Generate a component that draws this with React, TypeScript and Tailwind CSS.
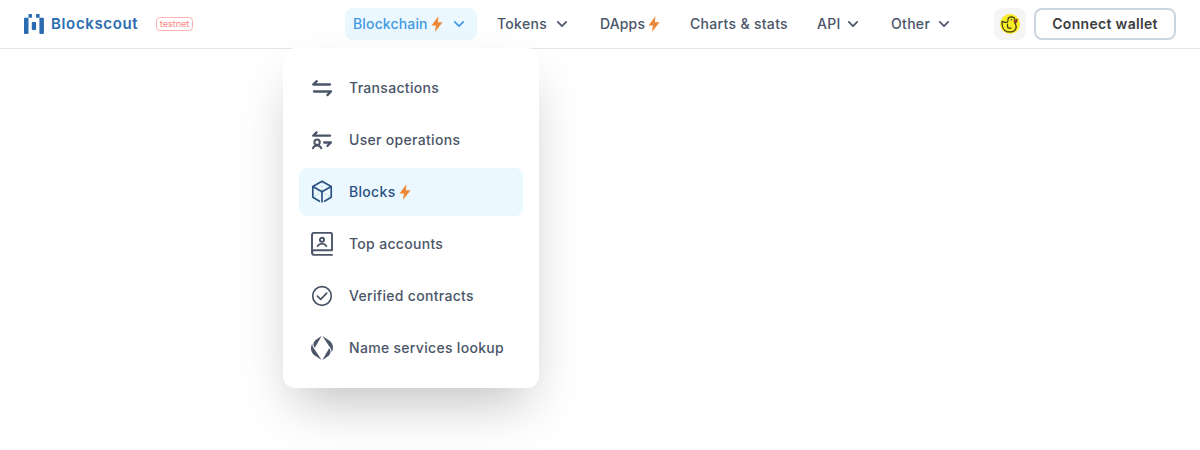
import React from 'react';

type IconProps = { className?: string };

const Bolt = ({ className = '' }: IconProps) => (
  <svg viewBox="0 0 12 16" className={`h-4 w-3 shrink-0 fill-[#ed8936] ${className}`}>
    <path d="M7.400.2.5 9.400H4.900L4 15.900 11.500 6.200H6.900z" />
  </svg>
);

const Chevron = () => (
  <svg viewBox="0 0 12 8" className="h-2 w-3 fill-none stroke-current" strokeWidth="1.7" strokeLinecap="round" strokeLinejoin="round">
    <path d="M1.8 1.900 6 6.100l4.200-4.200" />
  </svg>
);

const iconClass = 'h-6 w-6 shrink-0 fill-none stroke-current';

const TransactionsIcon = () => (
  <svg viewBox="0 0 24 24" className={iconClass} strokeWidth="2.3" strokeLinecap="round" strokeLinejoin="round">
    <path d="M20 8.500H3.200l3.600-3.300M4 15.500h17l-3.600 3.600" />
  </svg>
);

const UserOpsIcon = () => (
  <svg viewBox="0 0 24 24" className={iconClass} strokeLinecap="round" strokeLinejoin="round">
    <path strokeWidth="2.300" d="M20 7.700H3.200L6.500 4.400" />
    <path strokeWidth="2.300" d="M14.200 14.500h6.700l-3.500 3.500" />
    <circle cx="7.100" cy="14.300" r="2.700" strokeWidth="2" />
    <path strokeWidth="2" d="M2.900 20.200c1-1.800 2.400-2.600 4.200-2.600s3.200.8 4.200 2.600" />
  </svg>
);

const BlocksIcon = () => (
  <svg viewBox="0 0 24 24" className={iconClass} strokeWidth="1.700" strokeLinejoin="round">
    <path d="M10 21.400 2.800 17.300V6.400L12 1.200l9.200 5.200v10.900L14 21.400M2.800 6.400 12 11.800l9.200-5.400M12 11.800V22.500" />
    <path strokeWidth=".8" strokeDasharray="2 1.500" opacity=".35" d="M12 2v9.800M12 11.800 3.500 17M12 11.800l8.500 5.200" />
  </svg>
);

const AccountsIcon = () => (
  <svg viewBox="0 0 24 24" className={iconClass} strokeWidth="1.900" strokeLinecap="round" strokeLinejoin="round">
    <path d="M22 22.900H4.300a2.300 2.300 0 0 1 0-4.600H22V2.200A1.300 1.300 0 0 0 20.700.9H4A2 2 0 0 0 2 2.900v17.700" />
    <circle cx="12" cy="7.800" r="2.100" />
    <path d="M7.700 14c1-1.600 2.400-2.400 4.300-2.400s3.300.8 4.300 2.400" />
  </svg>
);

const VerifiedIcon = () => (
  <svg viewBox="0 0 24 24" className={iconClass} strokeWidth="1.700" strokeLinecap="round" strokeLinejoin="round">
    <circle cx="12" cy="12" r="9.300" />
    <path d="m7.400 12.100 3.300 3.300 6-6.200" />
  </svg>
);

const NameIcon = () => (
  <svg viewBox="0 0 24 24" className="h-6 w-6 shrink-0 fill-current">
    <path d="M11.600 0 5 11.500c-.1.200-.4.200-.5 0C3.300 9.600 2.800 6.600 5.300 4.300 7.300 2.700 9.600 1.300 11.600 0ZM2.300 7.500c-2 3.900-1.900 8.400 2.100 11.700L11.600 24 4.800 13.800C3.200 11.800 2.100 9.600 2.300 7.500Z" />
    <path d="m12.400 24 6.600-11.500c.1-.2.400-.2.500 0 1.200 1.900 1.700 4.900-.8 7.200-2 1.600-4.300 3-6.300 4.300ZM21.700 16.500c2-3.900 1.900-8.400-2.100-11.700L12.400 0l6.800 10.200c1.600 2 2.700 4.200 2.500 6.300Z" />
  </svg>
);

const DuckIcon = () => (
  <svg viewBox="0 0 20 20" className="h-5 w-5">
    <circle cx="10" cy="10" r="10" fill="#f7ec25" />
    <g fill="none" stroke="#3d3a16" strokeWidth="1.200" strokeLinecap="round" strokeLinejoin="round">
      <path d="M14.700 5.200C14 2.100 8.700 2 8 5.200c-.3 1.500.4 2.500-.7 2.900-1.600.6-3.500 0-5.200-.7-.4 4 .8 8.800 5 10.400h4.800c4.200-.8 5.600-5 2.900-9" />
      <path d="M7.500 10.200v2c0 1.400.8 2 2 2h1.400" />
    </g>
    <circle cx="11.400" cy="5.700" r=".8" fill="#3d3a16" />
    <path d="M13.800 6.700 17.200 5l-.4 3.300-2 .9Z" fill="#b5322b" stroke="#3d2618" strokeWidth=".6" />
  </svg>
);

const LogoMark = () => (
  <svg viewBox="0 0 20 20" className="h-5 w-5 shrink-0 fill-[#2b6cb0]">
    <path d="M4.900 0h2.500a.6.600 0 0 1 .6.600V3.200a.6.600 0 0 1-.6.600H4.500V.6A.6.600 0 0 1 4.900 0ZM12.500 0H15a.6.600 0 0 1 .6.600v3.200h-3a.6.600 0 0 1-.6-.6V.6a.6.600 0 0 1 .5-.6ZM.9 3.700h3.600v15.400a.9.900 0 0 1-.9.900H.9a.9.900 0 0 1-.9-.9V4.600a.9.900 0 0 1 .9-.9ZM15.400 3.700H19a.9.900 0 0 1 .9.900v14.500a.9.900 0 0 1-.9.900h-2.700a.9.900 0 0 1-.9-.9zM8.500 8h2.900a.7.700 0 0 1 .7.700v6.600a.7.700 0 0 1-.7.700H8.500a.7.700 0 0 1-.7-.7V8.700A.7.700 0 0 1 8.500 8Z" />
  </svg>
);

const navItems = [
  { label: 'Blockchain', width: 'w-[132px]', bolt: true, chevron: true, active: true },
  { label: 'Tokens', width: 'w-[91px]', chevron: true },
  { label: 'DApps', width: 'w-[78px]', bolt: true },
  { label: 'Charts & stats', width: 'w-[115px]' },
  { label: 'API', width: 'w-[62px]', chevron: true },
  { label: 'Other', width: 'w-[79px]', chevron: true },
];

const menuItems = [
  { label: 'Transactions', icon: <TransactionsIcon /> },
  { label: 'User operations', icon: <UserOpsIcon /> },
  { label: 'Blocks', icon: <BlocksIcon />, active: true },
  { label: 'Top accounts', icon: <AccountsIcon /> },
  { label: 'Verified contracts', icon: <VerifiedIcon /> },
  { label: 'Name services lookup', icon: <NameIcon /> },
];

export default function App() {
  return (
    <div className="relative h-[450px] overflow-hidden bg-white font-['Inter',sans-serif] text-sm font-medium tracking-[0.31px] text-[#4a5568]">
      <header className="flex h-[49px] items-start border-b border-[#e7e7e8] pt-2 pl-6">
        <div className="flex h-8 w-[321px] items-center">
          <LogoMark />
          <span className="ml-[7px] w-[87px] text-[15px] font-semibold tracking-[0.65px] text-[#2b6cb0]">Blockscout</span>
          <span className="ml-[18px] flex h-[14px] w-[37px] items-center justify-center rounded-[4px] border border-[#feb2b2] text-[9px] font-normal tracking-normal text-[#fc8181]">
            testnet
          </span>
        </div>
        <nav className="flex gap-3">
          {navItems.map((item) => (
            <a
              key={item.label}
              className={`flex h-8 items-center rounded-lg px-2 whitespace-nowrap ${item.width} ${item.active ? 'bg-[#ebf8ff] text-[#4299e1]' : ''}`}
            >
              <span className={item.bolt ? 'tracking-[0.15px]' : ''}>{item.label}</span>
              {item.bolt && <Bolt className="ml-[3px]" />}
              {item.chevron && (
                <span className="mr-1 ml-auto">
                  <Chevron />
                </span>
              )}
            </a>
          ))}
        </nav>
        <div className="ml-8 flex gap-2">
          <button className="flex h-8 w-8 items-center justify-center rounded-lg bg-[#f5f5f6]">
            <DuckIcon />
          </button>
          <button className="h-8 w-[142px] rounded-lg border-2 border-[#cbd5e0] font-semibold tracking-[0.32px] whitespace-nowrap text-[#3b3c3e]">
            Connect wallet
          </button>
        </div>
      </header>

      <div className="absolute top-12 left-[283px] flex w-64 flex-col gap-1 rounded-xl bg-white px-4 pt-4 pb-4 shadow-[0_25px_50px_-12px_rgba(0,0,0,0.25)]">
        {menuItems.map((item) => (
          <a
            key={item.label}
            className={`flex h-12 items-center rounded-lg pl-[11px] whitespace-nowrap ${item.active ? 'bg-[#ebf8ff] text-[#2c5282]' : ''}`}
          >
            {item.icon}
            <span className="ml-[15px]">{item.label}</span>
            {item.active && <Bolt className="ml-[3.5px]" />}
          </a>
        ))}
      </div>
    </div>
  );
}
